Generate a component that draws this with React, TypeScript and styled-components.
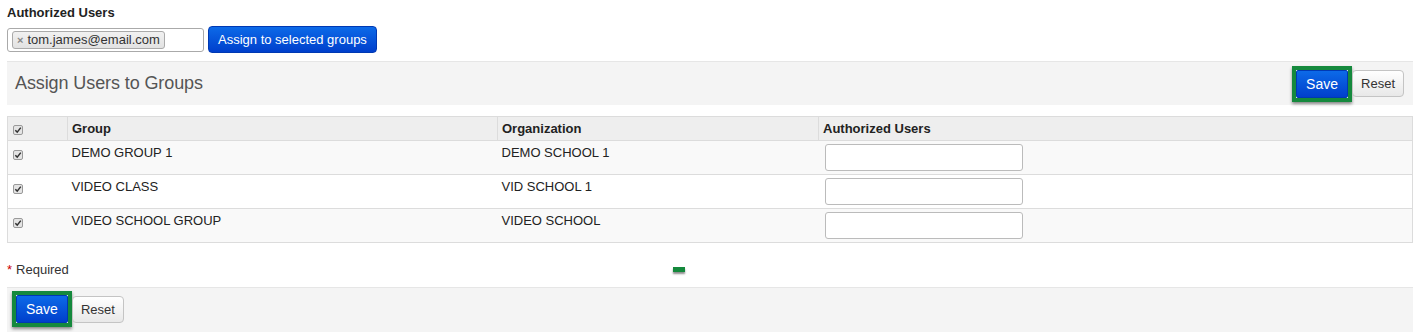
import React from "react";
import styled, { createGlobalStyle } from "styled-components";

const Global = createGlobalStyle`
  html, body { margin: 0; padding: 0; background: #fff; }
  body { font-family: "Liberation Sans", Arial, sans-serif; font-size: 13px; color: #333; }
`;

const Page = styled.div`
  padding: 5px 4px 0 7px;
  width: 1406px;
`;

const Label = styled.div`
  font-weight: bold;
  font-size: 13px;
  line-height: 15px;
  color: #222;
`;

const TagRow = styled.div`
  display: flex;
  align-items: center;
  gap: 4px;
  margin-top: 6px;
`;

const TagInput = styled.div`
  box-sizing: border-box;
  width: 197px;
  height: 24px;
  border: 1px solid #aaa;
  border-radius: 3px;
  padding: 2px 4px;
  display: flex;
  align-items: center;
`;

const Tag = styled.span`
  box-sizing: border-box;
  height: 18px;
  display: inline-flex;
  align-items: center;
  gap: 4px;
  padding: 0 4px 0 4px;
  border: 1px solid #aaa;
  border-radius: 3px;
  background: linear-gradient(#f1f1f1, #e2e2e2);
  font-size: 13px;
  color: #333;
`;

const TagX = styled.span`
  color: #888;
  font-size: 11px;
  font-weight: bold;
`;

const PrimaryButton = styled.button<{ $h?: number }>`
  box-sizing: border-box;
  height: ${(p) => p.$h ?? 26}px;
  padding: 0 9px;
  border: 1px solid #0039b3;
  border-radius: 4px;
  background: linear-gradient(#0c6ae8, #003fcc);
  color: #fff;
  font-family: "Liberation Sans", Arial, sans-serif;
  font-size: 13px;
  cursor: pointer;
`;

const DefaultButton = styled.button`
  box-sizing: border-box;
  height: 27px;
  padding: 0 8px;
  border: 1px solid #c4c4c4;
  border-radius: 4px;
  background: linear-gradient(#ffffff, #e8e8e8);
  color: #333;
  font-family: "Liberation Sans", Arial, sans-serif;
  font-size: 13px;
`;

const SaveFrame = styled.span`
  display: inline-flex;
  border: 4px solid #15893d;
  box-shadow: 0 2px 3px rgba(0, 0, 0, 0.45);
`;

const SaveInner = styled(PrimaryButton)`
  border-radius: 2px;
  padding: 0 9px;
  font-size: 14px;
`;

const ButtonGroup = styled.div`
  display: flex;
  align-items: center;
`;

const HeaderPanel = styled.div`
  margin-top: 8px;
  height: 44px;
  box-sizing: border-box;
  background: #f4f4f4;
  border-top: 1px solid #e6e6e6;
  display: flex;
  align-items: center;
  justify-content: space-between;
  padding: 0 9px 0 8px;
`;

const Title = styled.h2`
  margin: 0;
  font-family: "Liberation Sans", Arial, sans-serif;
  font-weight: normal;
  font-size: 18px;
  color: #555;
  letter-spacing: -0.1px;
`;

const Table = styled.table`
  margin-top: 11px;
  width: 100%;
  border-collapse: collapse;
  border: 1px solid #dcdcdc;
`;

const HeadCell = styled.th<{ $w?: number }>`
  ${(p) => (p.$w ? `width: ${p.$w}px;` : "")}
  box-sizing: border-box;
  height: 24px;
  padding: 0 4px;
  text-align: left;
  font-weight: bold;
  font-size: 13px;
  color: #222;
  background: #eeeeee;
  border: 1px solid #dcdcdc;
`;

const Row = styled.tr<{ $striped: boolean }>`
  background: ${(p) => (p.$striped ? "#f9f9f9" : "#fff")};
`;

const Cell = styled.td`
  box-sizing: border-box;
  height: 34px;
  padding: 4px 5px 0 4px;
  vertical-align: top;
  border-top: 1px solid #dcdcdc;
  font-size: 13px;
  color: #222;
  line-height: 16px;
`;

const CheckCell = styled(Cell)`
  padding: 9px 0 0 5px;
`;

const HeadCheckCell = styled(HeadCell)`
  padding: 3px 0 0 5px;
`;

const InputCell = styled(Cell)`
  padding: 3px 0 0 6px;
`;

const TextInput = styled.input`
  box-sizing: border-box;
  width: 198px;
  height: 27px;
  border: 1px solid #bbb;
  border-radius: 3px;
  background: #fff;
  display: block;
`;

const Footer = styled.div`
  display: flex;
  align-items: center;
  height: 20px;
  margin-top: 16px;
  font-size: 13px;
  color: #333;
`;

const Star = styled.span`
  color: #c00;
  margin-right: 4px;
`;

const GreenMark = styled.span`
  width: 12px;
  height: 5px;
  margin-left: 604px;
  background: #14893c;
  box-shadow: 0 2px 2px rgba(0, 0, 0, 0.45);
`;

const BottomPanel = styled.div`
  margin-top: 8px;
  height: 45px;
  box-sizing: border-box;
  background: #f4f4f4;
  border-top: 1px solid #e6e6e6;
  display: flex;
  align-items: flex-start;
  padding: 3px 0 0 5px;
`;

const CheckBoxIcon = () => (
  <svg width="10" height="10" viewBox="0 0 10 10" style={{ display: "block" }}>
    <rect x="0.5" y="0.5" width="9" height="9" rx="1.5" fill="#e4e4e4" stroke="#9a9a9a" />
    <path d="M2.3 5.2 L4.2 7.1 L7.8 2.6" fill="none" stroke="#333" strokeWidth="1.5" />
  </svg>
);

const rows = [
  { group: "DEMO GROUP 1", org: "DEMO SCHOOL 1" },
  { group: "VIDEO CLASS", org: "VID SCHOOL 1" },
  { group: "VIDEO SCHOOL GROUP", org: "VIDEO SCHOOL" },
];

const SaveReset = () => (
  <ButtonGroup>
    <SaveFrame>
      <SaveInner $h={28}>Save</SaveInner>
    </SaveFrame>
    <DefaultButton>Reset</DefaultButton>
  </ButtonGroup>
);

export default function App() {
  return (
    <>
      <Global />
      <Page>
        <Label>Authorized Users</Label>
        <TagRow>
          <TagInput>
            <Tag>
              <TagX>×</TagX>tom.james@email.com
            </Tag>
          </TagInput>
          <PrimaryButton $h={27}>Assign to selected groups</PrimaryButton>
        </TagRow>
        <HeaderPanel>
          <Title>Assign Users to Groups</Title>
          <SaveReset />
        </HeaderPanel>
        <Table>
          <thead>
            <tr>
              <HeadCheckCell $w={60}>
                <CheckBoxIcon />
              </HeadCheckCell>
              <HeadCell $w={430}>Group</HeadCell>
              <HeadCell $w={321}>Organization</HeadCell>
              <HeadCell>Authorized Users</HeadCell>
            </tr>
          </thead>
          <tbody>
            {rows.map((r, i) => (
              <Row key={r.group} $striped={i % 2 === 0}>
                <CheckCell>
                  <CheckBoxIcon />
                </CheckCell>
                <Cell>{r.group}</Cell>
                <Cell>{r.org}</Cell>
                <InputCell>
                  <TextInput type="text" />
                </InputCell>
              </Row>
            ))}
          </tbody>
        </Table>
        <Footer>
          <Star>*</Star>Required
          <GreenMark />
        </Footer>
        <BottomPanel>
          <SaveReset />
        </BottomPanel>
      </Page>
    </>
  );
}
